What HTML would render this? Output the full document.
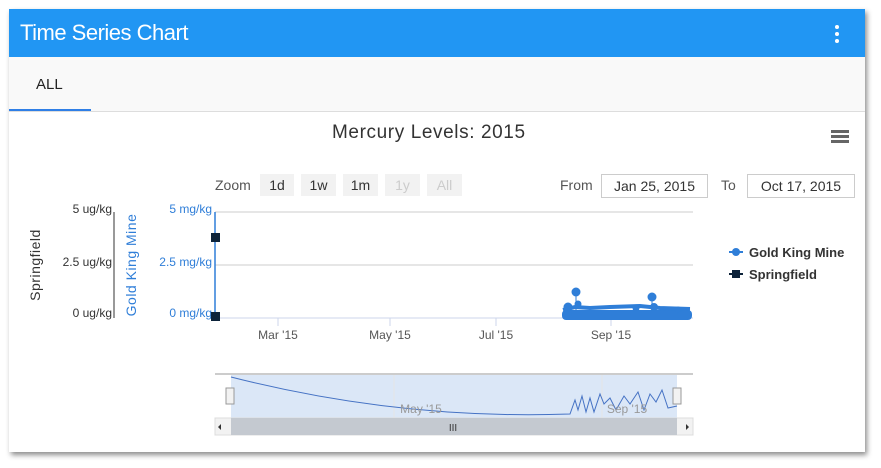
<!DOCTYPE html>
<html><head><meta charset="utf-8"><style>
body{margin:0;width:881px;height:468px;background:#fff;position:relative;overflow:hidden;font-family:"Liberation Sans",sans-serif;}
.card{position:absolute;left:9px;top:9px;width:856px;height:443px;background:#fff;box-shadow:2px 3px 5px rgba(0,0,0,.45);}
.hdr{position:absolute;left:0;top:0;width:856px;height:48px;background:#2196f3;}
.hdr span{position:absolute;left:11px;top:11px;color:#fff;font-size:22px;letter-spacing:-0.5px}
.dot{position:absolute;left:826px;width:4px;height:4px;border-radius:2px;background:#fff}
.tabs{position:absolute;left:0;top:48px;width:856px;height:54px;background:#f9f9f9;border-bottom:1px solid #ddd}
.t{position:absolute;font-size:13px;color:#333}
.btn{position:absolute;top:174px;height:22px;background:#f2f2f2;font-size:14px;color:#333;text-align:center;line-height:22px}
.inp{position:absolute;top:174px;height:22px;border:1px solid #ccc;font-size:14px;color:#333;text-align:center;line-height:22px}
</style></head><body>
<div class="card">
<div class="hdr"><span>Time Series Chart</span>
<div class="dot" style="top:16px"></div><div class="dot" style="top:23px"></div><div class="dot" style="top:30px"></div></div>
<div class="tabs"><div class="t" style="left:27px;top:19px;font-size:15px;color:#222">ALL</div>
<div style="position:absolute;left:0;top:52px;width:82px;height:2px;background:#2f7fe6"></div></div>
</div>
<div class="t" style="left:332px;top:122px;font-size:19px;color:#333;letter-spacing:0.6px">Mercury Levels: 2015</div>
<div style="position:absolute;left:831px;top:130px;width:18px;height:3px;background:#666;box-shadow:0 5px 0 #666,0 10px 0 #666"></div>
<div class="t" style="left:215px;top:177px;font-size:14px;color:#555">Zoom</div>
<div class="btn" style="left:260px;width:34px">1d</div>
<div class="btn" style="left:301px;width:35px">1w</div>
<div class="btn" style="left:343px;width:35px">1m</div>
<div class="btn" style="left:385px;width:35px;color:#ccc">1y</div>
<div class="btn" style="left:427px;width:35px;color:#ccc">All</div>
<div class="t" style="left:560px;top:177px;font-size:14px;color:#555">From</div>
<div class="inp" style="left:601px;width:105px">Jan 25, 2015</div>
<div class="t" style="left:721px;top:177px;font-size:14px;color:#555">To</div>
<div class="inp" style="left:747px;width:106px">Oct 17, 2015</div>
<svg style="position:absolute;left:0;top:0" width="881" height="468" font-family="Liberation Sans, sans-serif" font-size="12">
<line x1="215" y1="212" x2="693" y2="212" stroke="#ccc"/>
<line x1="215" y1="265" x2="693" y2="265" stroke="#ccc"/>
<line x1="215" y1="318" x2="693" y2="318" stroke="#ccd6eb"/>
<line x1="215" y1="212" x2="215" y2="318" stroke="#2f7ed8" stroke-width="1.5"/>
<line x1="114" y1="212" x2="114" y2="318" stroke="#333"/>
<g fill="#333" text-anchor="end"><text x="112" y="213">5 ug/kg</text><text x="112" y="266">2.5 ug/kg</text><text x="112" y="317">0 ug/kg</text></g>
<g fill="#2f7ed8" text-anchor="end"><text x="212" y="213">5 mg/kg</text><text x="212" y="266">2.5 mg/kg</text><text x="212" y="317">0 mg/kg</text></g>
<text transform="translate(40,265) rotate(-90)" text-anchor="middle" fill="#333" font-size="14" letter-spacing="0.5">Springfield</text>
<text transform="translate(136,265) rotate(-90)" text-anchor="middle" fill="#2f7ed8" font-size="14" letter-spacing="0.5">Gold King Mine</text>
<g stroke="#ccd6eb"><line x1="278" y1="318" x2="278" y2="326"/><line x1="390" y1="318" x2="390" y2="326"/><line x1="496" y1="318" x2="496" y2="326"/><line x1="611" y1="318" x2="611" y2="326"/></g>
<g fill="#555" text-anchor="middle"><text x="278" y="339">Mar '15</text><text x="390" y="339">May '15</text><text x="496" y="339">Jul '15</text><text x="611" y="339">Sep '15</text></g>
<rect x="211" y="233" width="9" height="9" fill="#0d233a"/><rect x="211" y="312" width="9" height="9" fill="#0d233a"/>
<g fill="#2f7ed8" stroke="#2f7ed8">
<rect x="562" y="310" width="130" height="10" rx="4" stroke="none"/>
<path d="M563 310 L575 307 L590 308 L610 307 L640 306 L660 308 L690 309" fill="none" stroke-width="4"/>
<line x1="576" y1="292" x2="576" y2="315"/><circle cx="576" cy="292" r="4"/><circle cx="568" cy="307" r="4"/><circle cx="578" cy="304" r="3"/>
<line x1="652" y1="297" x2="652" y2="315"/><circle cx="652" cy="297" r="4"/><circle cx="654" cy="307" r="3.5"/><circle cx="636" cy="308" r="3"/><circle cx="678" cy="310" r="3"/>
</g>
<circle cx="736" cy="252" r="4" fill="#2f7ed8"/><line x1="729" y1="252" x2="743" y2="252" stroke="#2f7ed8" stroke-width="2"/>
<rect x="732" y="270" width="8" height="8" fill="#0d233a"/><line x1="729" y1="274" x2="743" y2="274" stroke="#0d233a" stroke-width="2"/>
<g font-weight="bold" fill="#333" font-size="13"><text x="749" y="257">Gold King Mine</text><text x="749" y="279">Springfield</text></g>
<line x1="215" y1="374" x2="693" y2="374" stroke="#ccc" stroke-width="2"/>
<rect x="231" y="375" width="446" height="43" fill="#dbe7f7"/>
<line x1="394" y1="375" x2="394" y2="418" stroke="#e6e6e6"/><line x1="602" y1="375" x2="602" y2="418" stroke="#e6e6e6"/>
<path d="M231 377 Q400 420 570 414 L575 400 L578 410 L582 396 L586 412 L590 398 L594 412 L600 394 L604 404 L610 398 L616 410 L624 396 L630 404 L638 392 L644 410 L650 394 L656 402 L662 390 L668 408 L677 406" fill="none" stroke="#4572c4" stroke-width="1"/>
<g fill="#999" text-anchor="middle"><text x="421" y="413">May '15</text><text x="627" y="413">Sep '15</text></g>
<rect x="226" y="388" width="8" height="16" fill="#f2f2f2" stroke="#999"/><rect x="673" y="388" width="8" height="16" fill="#f2f2f2" stroke="#999"/>
<rect x="215" y="418" width="478" height="17" fill="#f2f2f2" stroke="#ddd"/>
<rect x="231" y="418" width="446" height="17" fill="#c4c9d0"/>
<text x="453" y="431" fill="#333" font-size="10" text-anchor="middle">III</text>
<path d="M221 424 L218 427 L221 430Z M686 424 L689 427 L686 430Z" fill="#333"/>
</svg>
</body></html>
